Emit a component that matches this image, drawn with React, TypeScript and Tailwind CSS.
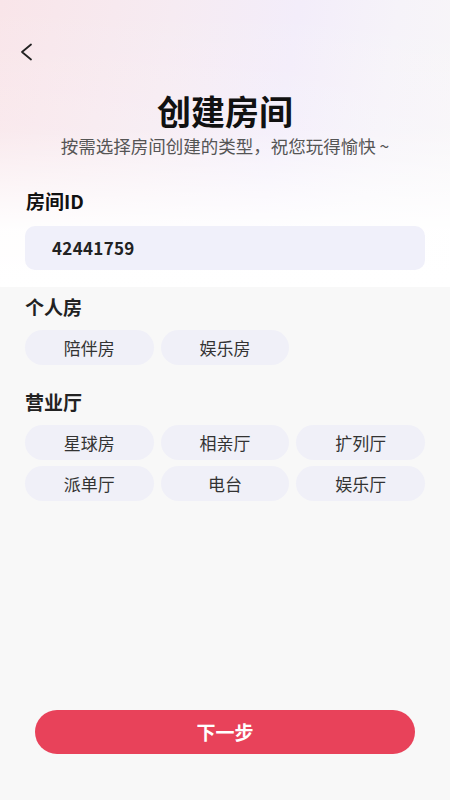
import React from "react";

const font = { fontFamily: '"Noto Sans CJK SC", "Noto Sans", sans-serif' };

function Chip({ label }: { label: string }) {
  return (
    <div className="h-[35px] rounded-full bg-[#f0f0f8] flex items-center justify-center text-[17px] text-[#333333]">
      {label}
    </div>
  );
}

export default function App() {
  return (
    <div style={font} className="w-[450px] h-[800px] bg-[#f8f8f8] flex flex-col overflow-hidden">
      <div className="relative h-[287px] bg-[linear-gradient(100deg,#f9e5e9_0%,#f6ebf2_35%,#f3edfa_60%,#f6f3f9_80%,#f8f6f8_100%)]">
        <div className="absolute inset-0 bg-[linear-gradient(180deg,rgba(255,255,255,0)_0%,rgba(255,255,255,0.15)_45%,rgba(255,255,255,0.95)_80%,#ffffff_100%)]" />
        <div className="relative flex flex-col">
          <div className="h-[36px]" />
          <div className="pl-[18px] h-[32px] flex items-center">
            <svg width="16" height="20" viewBox="0 0 16 20" fill="none">
              <path d="M13 2.5L4 10l9 7.5" stroke="#222" strokeWidth="1.8" strokeLinecap="round" strokeLinejoin="round" />
            </svg>
          </div>
          <div className="mt-[21px] text-center text-[34px] leading-[44px] font-bold text-[#111]">创建房间</div>
          <div className="mt-[1px] text-center text-[17.5px] leading-[24px] text-[#555]">按需选择房间创建的类型，祝您玩得愉快 ~</div>
          <div className="mt-[31px] px-[26px] text-[19px] leading-[24px] font-bold text-[#111]">房间ID</div>
          <div className="mt-[13px] mx-[25px] h-[44px] rounded-[10px] bg-[#f0f0fa] flex items-center pl-[27px] text-[17px] font-bold text-[#222] tracking-[0.3px]">
            42441759
          </div>
        </div>
      </div>
      <div className="px-[25px]">
        <div className="mt-[8px] text-[19px] leading-[24px] font-bold text-[#222]">个人房</div>
        <div className="mt-[11px] grid grid-cols-3 gap-x-[7px] gap-y-[6px]">
          <Chip label="陪伴房" />
          <Chip label="娱乐房" />
        </div>
        <div className="mt-[25px] text-[19px] leading-[24px] font-bold text-[#222]">营业厅</div>
        <div className="mt-[11px] grid grid-cols-3 gap-x-[7px] gap-y-[6px]">
          <Chip label="星球房" />
          <Chip label="相亲厅" />
          <Chip label="扩列厅" />
          <Chip label="派单厅" />
          <Chip label="电台" />
          <Chip label="娱乐厅" />
        </div>
      </div>
      <div className="flex-1" />
      <div className="px-[35px] pb-[46px]">
        <div className="h-[44px] rounded-full bg-[#e8425a] flex items-center justify-center text-white text-[19px] font-bold">
          下一步
        </div>
      </div>
    </div>
  );
}
